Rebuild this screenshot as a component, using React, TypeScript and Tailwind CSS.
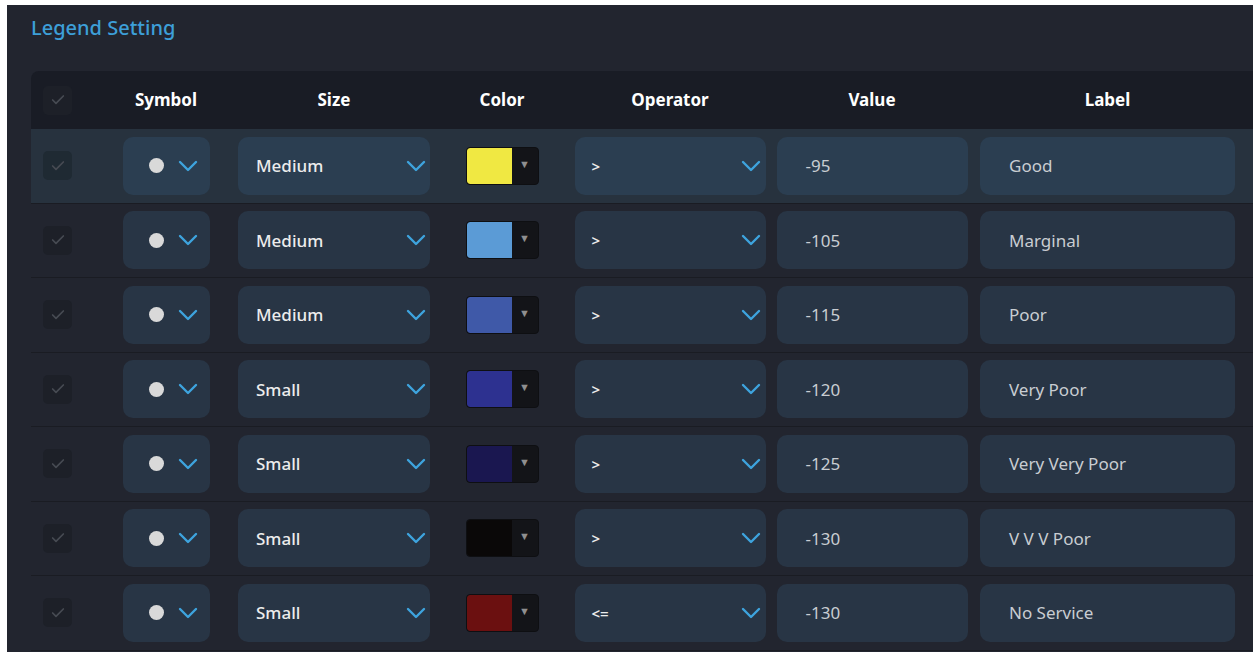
import { Check } from "lucide-react";

type Rule = {
  size: string;
  color: string;
  operator: string;
  value: string;
  label: string;
};

const rules: Rule[] = [
  { size: "Medium", color: "#f0e842", operator: ">", value: "-95", label: "Good" },
  { size: "Medium", color: "#5b9bd6", operator: ">", value: "-105", label: "Marginal" },
  { size: "Medium", color: "#3f59a8", operator: ">", value: "-115", label: "Poor" },
  { size: "Small", color: "#2d3190", operator: ">", value: "-120", label: "Very Poor" },
  { size: "Small", color: "#1a1750", operator: ">", value: "-125", label: "Very Very Poor" },
  { size: "Small", color: "#0a0808", operator: ">", value: "-130", label: "V V V Poor" },
  { size: "Small", color: "#6b1010", operator: "<=", value: "-130", label: "No Service" },
];

const cols = "grid grid-cols-[70px_130px_206px_130px_206px_198px_273px_1fr]";

function Chevron() {
  return (
    <svg width="20" height="12" viewBox="0 0 20 12" fill="none">
      <path d="M2 2l8 8 8-8" stroke="#3ea4de" strokeWidth="2.4" strokeLinecap="round" strokeLinejoin="round" />
    </svg>
  );
}

function Checkbox({ active }: { active?: boolean }) {
  return (
    <div
      className={`w-[29px] h-[29px] rounded-[5px] flex items-center justify-center ${
        active ? "bg-[#1f2a33]" : "bg-[#1d2028]"
      }`}
    >
      <Check className="w-4 h-4 text-[#474b53]" strokeWidth={2.5} />
    </div>
  );
}

export default function App() {
  return (
    <div className="w-[1253px] h-[652px] bg-white overflow-hidden" style={{ fontFamily: '"Noto Sans", sans-serif' }}>
      <div className="ml-[7px] mt-[5px] h-[647px] bg-[#22252f] pt-[9px]">
        <h1 className="pl-[24px] text-[20px] leading-[28px] text-[#3d9fd8] font-medium">Legend Setting</h1>

        <div className="mt-[29px] ml-[24px]">
          {/* header */}
          <div className={`${cols} h-[58px] items-center bg-[#191c25] rounded-tl-lg text-white font-bold text-[17px]`}>
            <div className="pl-[12px]">
              <Checkbox />
            </div>
            <div className="text-center">Symbol</div>
            <div className="text-center">Size</div>
            <div className="text-center">Color</div>
            <div className="text-center">Operator</div>
            <div className="text-center">Value</div>
            <div className="text-center">Label</div>
            <div />
          </div>

          {rules.map((r, i) => {
            const active = i === 0;
            const field = active ? "bg-[#2b3e51]" : "bg-[#283545]";
            return (
              <div
                key={i}
                className={`${cols} h-[74.5px] items-center border-b border-[#1a1c23] ${
                  active ? "bg-[#27323e]" : ""
                }`}
              >
                <div className="pl-[12px]">
                  <Checkbox active={active} />
                </div>
                <div className="flex justify-center">
                  <div className={`w-[87px] h-[58px] rounded-[10px] ${field} flex items-center gap-[14px] pl-[26px]`}>
                    <span className="w-[15px] h-[15px] rounded-full bg-[#d9d9d9]" />
                    <Chevron />
                  </div>
                </div>
                <div className="flex justify-center">
                  <div className={`w-[192px] h-[58px] rounded-[10px] ${field} flex items-center justify-between pl-[18px] pr-[4px] text-[17px] text-[#ececec] font-medium`}>
                    <span>{r.size}</span>
                    <Chevron />
                  </div>
                </div>
                <div className="flex justify-center">
                  <div className="w-[73px] h-[38px] rounded-[4px] bg-[#131418] border border-[#0e0f12] flex overflow-hidden">
                    <span className="w-[45px] h-full rounded-l-[3px]" style={{ backgroundColor: r.color }} />
                    <span className="flex-1 flex items-center justify-center text-[11px] text-[#8f8f8f] pb-[4px]">▼</span>
                  </div>
                </div>
                <div className="flex justify-center">
                  <div className={`w-[191px] h-[58px] rounded-[10px] ${field} flex items-center justify-between pl-[17px] pr-[5px] text-[15px] text-[#ececec] font-semibold`}>
                    <span>{r.operator}</span>
                    <Chevron />
                  </div>
                </div>
                <div className="flex justify-center">
                  <div className={`w-[191px] h-[58px] rounded-[10px] ${field} flex items-center pl-[29px] text-[17px] text-[#c9cdd2]`}>
                    {r.value}
                  </div>
                </div>
                <div className="flex justify-center">
                  <div className={`w-[255px] h-[58px] rounded-[10px] ${field} flex items-center pl-[29px] text-[17px] text-[#c9cdd2]`}>
                    {r.label}
                  </div>
                </div>
                <div />
              </div>
            );
          })}
        </div>
      </div>
    </div>
  );
}
